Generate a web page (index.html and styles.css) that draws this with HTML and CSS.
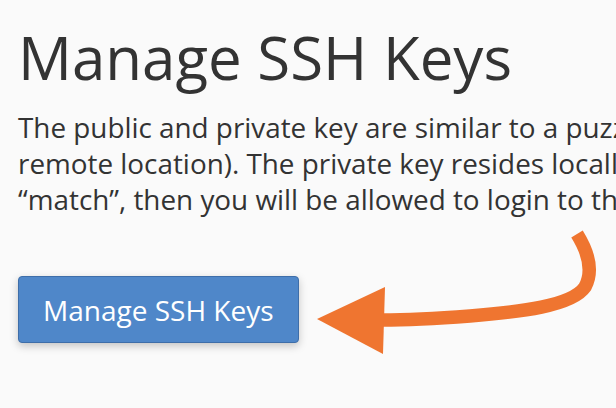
FILE: index.html
```html
<!DOCTYPE html>
<html lang="en">
<head>
<meta charset="utf-8">
<title>Manage SSH Keys</title>
<link rel="stylesheet" href="styles.css">
</head>
<body>
<main class="page">
  <h1 class="title">Manage SSH Keys</h1>
  <p class="intro">
    <span class="line">The public and private key are similar to a puzzle. They are created together to use during the login authentication process. The public key resides on the server (the</span>
    <span class="line">remote location). The private key resides locally on your computer/server. When you attempt to login to a server, the public and private key are compared. If these two keys</span>
    <span class="line">“match”, then you will be allowed to login to the server location.</span>
  </p>
  <div class="actions">
    <button class="btn" type="button">Manage SSH Keys</button>
  </div>
  <svg class="arrow" width="616" height="408" viewBox="0 0 616 408" aria-hidden="true">
    <path d="M577 234 C590 255 593 272 585 287 C572 306 520 312 470 316 C430 319 400 320 382 320" fill="none" stroke="#ef7530" stroke-width="13.5"/>
    <polygon points="317,319 385,287 383,354" fill="#ef7530"/>
  </svg>
</main>
</body>
</html>
```
FILE: styles.css
```css
html, body {
  margin: 0;
  padding: 0;
  background: #fafafa;
  overflow: hidden;
}
.page {
  position: relative;
  width: 616px;
  height: 408px;
  overflow: hidden;
  padding: 19px 0 0 18px;
  box-sizing: border-box;
  font-family: "Open Sans", "Noto Sans", sans-serif;
  color: #333333;
}
.title {
  margin: 0;
  font-size: 60px;
  line-height: 76px;
  font-weight: 400;
  white-space: nowrap;
}
.intro {
  margin: 14px 0 0 0;
  font-size: 27.85px;
  line-height: 36px;
  white-space: nowrap;
}
.line {
  display: block;
}
.actions {
  margin-top: 59px;
  display: flex;
}
.btn {
  font-family: "Open Sans", "Noto Sans", sans-serif;
  font-size: 28px;
  line-height: 40px;
  color: #ffffff;
  background: #4f87c9;
  border: 1px solid #3e6ea9;
  border-radius: 4px;
  padding: 13px 24px 12px;
  box-shadow: 0 3px 8px rgba(0, 0, 0, 0.22);
  cursor: pointer;
}
.arrow {
  position: absolute;
  left: 0;
  top: 0;
}
```
